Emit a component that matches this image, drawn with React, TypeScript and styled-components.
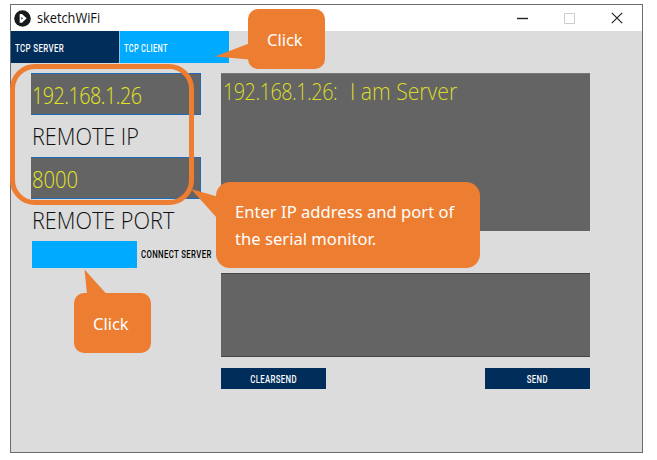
import React from "react";
import styled, { createGlobalStyle } from "styled-components";

const GlobalStyle = createGlobalStyle`
  * { box-sizing: border-box; }
  body { margin: 0; background: #fff; overflow: hidden; }
`;

const ORANGE = "#ed7d31";

const Page = styled.div`
  position: relative;
  width: 657px;
  height: 460px;
  padding: 4px 0 0 10px;
  background: #fff;
`;

const Window = styled.main`
  display: flex;
  flex-direction: column;
  width: 633px;
  height: 449px;
  border: 1px solid #6c6c6c;
  background: #dcdcdc;
`;

const TitleBar = styled.header`
  display: flex;
  align-items: center;
  height: 26px;
  padding: 0 19px 0 3px;
  background: #fff;
`;

const Title = styled.h1<{ $squeeze: number }>`
  flex: 1;
  margin: 0 0 0 6px;
  font: 400 14px/24px "Open Sans", sans-serif;
  color: #111;
  transform: scaleX(${(p) => p.$squeeze});
  transform-origin: left;
`;

const Controls = styled.div`
  display: flex;
  align-items: center;
  gap: 36px;
`;

const Tabs = styled.nav`
  display: flex;
  gap: 1px;
  height: 32px;
  background: linear-gradient(90deg, #8fc4ea 218px, transparent 218px);
`;

const Pixel = styled.span<{ $squeeze: number; $color?: string; $center?: boolean }>`
  display: inline-block;
  font: 500 10.5px/12px Roboto, sans-serif;
  letter-spacing: 0.5px;
  white-space: nowrap;
  color: ${(p) => p.$color ?? "#fff"};
  transform: scaleX(${(p) => p.$squeeze});
  transform-origin: ${(p) => (p.$center ? "center" : "left")};
`;

const Tab = styled.button<{ $active?: boolean }>`
  width: ${(p) => (p.$active ? 109 : 108)}px;
  padding: 0 0 0 4px;
  border: 0;
  text-align: left;
  background: ${(p) => (p.$active ? "#00aaff" : "#002d5a")};
`;

const Body = styled.div`
  display: flex;
  gap: 20px;
  padding: 10px 0 0 20px;
`;

const Settings = styled.section`
  display: flex;
  flex-direction: column;
  width: 170px;
`;

const Messages = styled.section`
  display: flex;
  flex-direction: column;
  width: 369px;
`;

const Light = styled.span<{ $squeeze?: number; $tracking?: number; $size?: number }>`
  display: inline-block;
  white-space: pre;
  font: 300 ${(p) => p.$size ?? 23.5}px/32px "Open Sans", sans-serif;
  letter-spacing: ${(p) => p.$tracking ?? 0}px;
  transform: scaleX(${(p) => p.$squeeze ?? 1});
  transform-origin: left;
`;

const Field = styled.div`
  height: 42px;
  padding: 5px 0 0;
  border: 1px solid #1c6cb8;
  border-left-color: #646464;
  background: #646464;
  color: #e6e61e;
`;

const FieldLabel = styled.label`
  height: 42px;
  padding: 5px 0 0 1px;
  color: #111;
`;

const ConnectRow = styled.div`
  display: flex;
  align-items: center;
  gap: 4px;
  padding-left: 1px;
  white-space: nowrap;
`;

const ConnectButton = styled.button`
  flex: none;
  width: 105px;
  height: 27px;
  border: 0;
  background: #00aaff;
`;

const Output = styled.div`
  display: flex;
  height: 158px;
  padding: 1px 0 0 2px;
  border-top: 1px solid #777;
  background: #646464;
  color: #dcdc28;
`;

const Sender = styled.div`
  width: 127px;
`;

const Input = styled.div`
  height: 84px;
  margin-top: 42px;
  border: 1px solid #464646;
  border-width: 1px 0;
  background: #646464;
`;

const Actions = styled.div`
  display: flex;
  justify-content: space-between;
  margin-top: 11px;
`;

const Action = styled.button`
  width: 105px;
  height: 21px;
  padding: 0 0 1px;
  border: 0;
  text-align: center;
  background: #002d5a;
`;

const Highlight = styled.div`
  position: absolute;
  left: 10px;
  top: 64px;
  width: 184px;
  height: 141px;
  border: 5px solid ${ORANGE};
  border-radius: 25px;
`;

const Callout = styled.aside<{ $x: number; $y: number; $w: number; $h: number; $r: number }>`
  position: absolute;
  left: ${(p) => p.$x}px;
  top: ${(p) => p.$y}px;
  width: ${(p) => p.$w}px;
  height: ${(p) => p.$h}px;
  border-radius: ${(p) => p.$r}px;
  background: ${ORANGE};
  display: flex;
  flex-direction: column;
  justify-content: center;
  padding: 0 0 0 19px;
`;

const Tail = styled.svg`
  position: absolute;
  left: 0;
  top: 0;
  width: 1px;
  height: 1px;
  overflow: visible;
  fill: ${ORANGE};
`;

const CalloutText = styled.span<{ $squeeze: number }>`
  font: 400 17px/27px "Noto Sans", sans-serif;
  white-space: nowrap;
  color: #fff;
  transform: scaleX(${(p) => p.$squeeze});
  transform-origin: left;
`;

export default function App() {
  return (
    <Page>
      <GlobalStyle />
      <Window>
        <TitleBar>
          <svg width="17" height="17" viewBox="0 0 17 17">
            <circle cx="8.5" cy="8.5" r="8.3" fill="#17191b" />
            <path d="M5.7 4H8L12.7 8.3 8 12.8H5.7Z" fill="#fff" />
            <path d="M7.4 7 9 8.3 7.4 9.6Z" fill="#17191b" />
          </svg>
          <Title $squeeze={0.91}>sketchWiFi</Title>
          <Controls>
            <svg width="11" height="11" viewBox="0 0 11 11">
              <path d="M0 5.5H11" stroke="#222" strokeWidth="1.4" />
            </svg>
            <svg width="11" height="11" viewBox="0 0 11 11">
              <path d="M.5.5H10.5V10.5H.5Z" fill="none" stroke="#ccc" />
            </svg>
            <svg width="12" height="12" viewBox="0 0 12 12">
              <path d="M.8.8 11.2 11.2M11.2.8.8 11.2" stroke="#222" strokeWidth="1.2" />
            </svg>
          </Controls>
        </TitleBar>
        <Tabs>
          <Tab><Pixel $squeeze={0.75}>TCP SERVER</Pixel></Tab>
          <Tab $active><Pixel $squeeze={0.7}>TCP CLIENT</Pixel></Tab>
        </Tabs>
        <Body>
          <Settings>
            <Field><Light $squeeze={0.84} $tracking={-0.6}>192.168.1.26</Light></Field>
            <FieldLabel><Light $size={23} $squeeze={0.94}>REMOTE IP</Light></FieldLabel>
            <Field><Light $squeeze={0.86}>8000</Light></Field>
            <FieldLabel><Light $size={23} $squeeze={0.94}>REMOTE PORT</Light></FieldLabel>
            <ConnectRow>
              <ConnectButton aria-label="Connect server" />
              <Pixel $squeeze={0.74} $color="#000">CONNECT SERVER</Pixel>
            </ConnectRow>
          </Settings>
          <Messages>
            <Output>
              <Sender><Light $squeeze={0.84} $tracking={-0.55}>{"192.168.1.26:  "}</Light></Sender>
              <Light $squeeze={0.9}>I am Server</Light>
            </Output>
            <Input />
            <Actions>
              <Action><Pixel $squeeze={0.74} $center>CLEARSEND</Pixel></Action>
              <Action><Pixel $squeeze={0.74} $center>SEND</Pixel></Action>
            </Actions>
          </Messages>
        </Body>
      </Window>

      <Highlight />
      <Callout $x={248} $y={9} $w={77} $h={60} $r={10}>
        <Tail><path d="M1 34.5-33 47.5 1 50.5Z" /></Tail>
        <CalloutText $squeeze={0.97}>Click</CalloutText>
      </Callout>
      <Callout $x={216} $y={182} $w={264} $h={86} $r={14}>
        <Tail><path d="M1 14.5-25 7 1 36Z" /></Tail>
        <CalloutText $squeeze={0.977}>Enter IP address and port of</CalloutText>
        <CalloutText $squeeze={0.977}>the serial monitor.</CalloutText>
      </Callout>
      <Callout $x={74} $y={293} $w={77} $h={60} $r={10}>
        <Tail><path d="M13 1 10.5-23.5 32.5 1Z" /></Tail>
        <CalloutText $squeeze={0.97}>Click</CalloutText>
      </Callout>
    </Page>
  );
}
